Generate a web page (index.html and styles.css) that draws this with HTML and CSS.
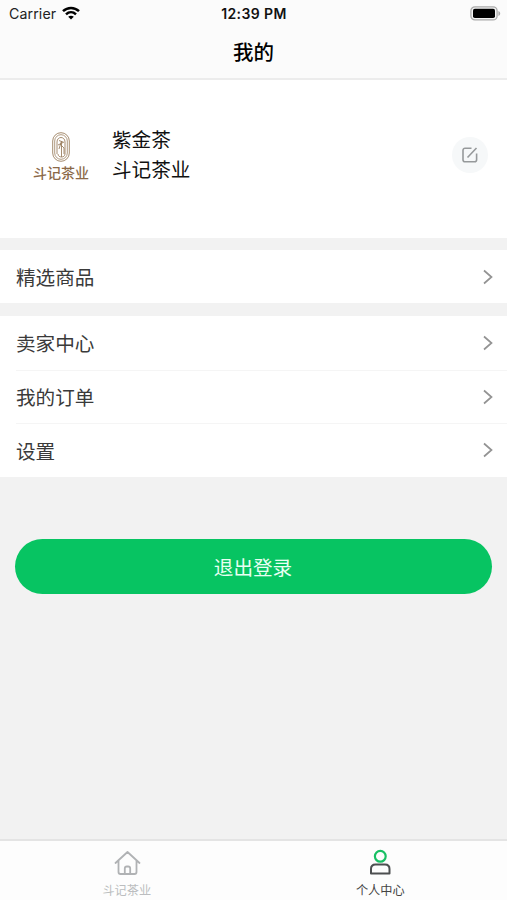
FILE: index.html
```html
<!DOCTYPE html>
<html lang="zh-CN">
<head>
<meta charset="utf-8">
<title>我的</title>
<link rel="stylesheet" href="styles.css">
</head>
<body>
<div class="app">
  <header class="header">
    <div class="status">
      <div class="carrier">Carrier
        <svg class="wifi" width="18" height="14" viewBox="0 0 18 14" fill="none" stroke="#000" stroke-width="2.5"><path d="M1 5.2C5.6.8 12.4.8 17 5.2M4 8.3c2.9-2.7 7.1-2.7 10 0"/><path d="M9 13.5 6.2 10.8c1.6-1.3 4-1.3 5.6 0z" fill="#000" stroke="none"/></svg>
      </div>
      <div class="time">12:39 PM</div>
      <svg class="battery" width="31" height="15" viewBox="0 0 31 15"><rect x=".9" y=".9" width="26.2" height="13" rx="4" fill="#f4f4f4" stroke="#aaa" stroke-width="1.3"/><rect x="3" y="2.8" width="22" height="9.2" rx="1.8"/><path d="M28.4 5c2.4.8 2.4 4.2 0 5z" fill="#aaa"/></svg>
    </div>
    <h1 class="title">我的</h1>
  </header>
  <section class="profile">
    <div class="logo">
      <svg width="18" height="30" viewBox="0 0 18 30" fill="none" stroke="#9c8060"><rect x=".7" y=".7" width="16.6" height="28.6" rx="8.3" stroke-width=".9"/><rect x="2.7" y="2.7" width="12.6" height="24.6" rx="6.3" stroke-width=".8"/><path d="M5 22V10c0-6 8-6 8 0v12c0 4-7 4-7 0M7 8.5l4 1.5M6 13l6-3M7 17l2.5-8v9M8 12l4 4v6M9.5 18v7" stroke-width=".9"/></svg>
      <span class="brand">斗记茶业</span>
    </div>
    <div class="names"><div>紫金茶</div><div>斗记茶业</div></div>
    <div class="edit">
      <svg width="18" height="18" viewBox="0 0 18 18" fill="none" stroke="#96999b" stroke-width="1.6"><path d="M10.5 2.2H4A2 2 0 0 0 2 4.2v9.6A2 2 0 0 0 4 15.8h9.6a2 2 0 0 0 2-2V7.5M6.5 11.5l9-9.5"/></svg>
    </div>
  </section>
  <nav class="group featured">
    <div class="row"><span>精选商品</span><svg class="arrow" viewBox="0 0 10 16"><path d="m1 1.5 7.5 6.5L1 14.5"/></svg></div>
  </nav>
  <nav class="group">
    <div class="row"><span>卖家中心</span><svg class="arrow" viewBox="0 0 10 16"><path d="m1 1.5 7.5 6.5L1 14.5"/></svg></div>
    <div class="row"><span>我的订单</span><svg class="arrow" viewBox="0 0 10 16"><path d="m1 1.5 7.5 6.5L1 14.5"/></svg></div>
    <div class="row"><span>设置</span><svg class="arrow" viewBox="0 0 10 16"><path d="m1 1.5 7.5 6.5L1 14.5"/></svg></div>
  </nav>
  <button class="logout">退出登录</button>
  <footer class="tabs">
    <div class="tab">
      <svg width="28" height="28" viewBox="0 0 28 28" fill="none" stroke="#b0b2b4" stroke-width="1.8" stroke-linejoin="round" stroke-linecap="round"><path d="M2.500 14 14.500 3l12 11M5.500 11.500V23q0 2 2 2h14q2 0 2-2V11.500M11.800 25v-5.500q0-2 2-2h1.400q2 0 2 2V25"/></svg>
      <span>斗记茶业</span>
    </div>
    <div class="tab active">
      <svg width="28" height="28" viewBox="0 0 28 28" fill="none" stroke-width="2.2"><circle cx="14.3" cy="7.3" r="5.4" stroke="#18c064"/><path d="M5 24.500V20q0-4.500 4.500-4.500h9.500q4.500 0 4.500 4.500v4.500z" stroke="#4d4f50" stroke-width="2" stroke-linejoin="round"/></svg>
      <span>个人中心</span>
    </div>
  </footer>
</div>
</body>
</html>
```
FILE: styles.css
```css
* { box-sizing: border-box; }
body { margin: 0; font-family: Inter, "Noto Sans CJK SC", sans-serif; color: #111; }
.app { height: 900px; display: flex; flex-direction: column; background: #f2f2f2; overflow: hidden; }
.header { height: 80px; flex: none; background: #fbfbfb; border-bottom: 2px solid #ececec; }
.status { height: 28px; display: grid; grid-template-columns: 1fr auto 1fr; align-items: center; padding: 0 6px 0 9px; }
.carrier { display: flex; align-items: center; gap: 6px; font-size: 14.2px; letter-spacing: .1px; color: #222; margin-top: -1px; }
.wifi { margin-top: -2px; }
.time { font-size: 14px; font-weight: 600; letter-spacing: .4px; margin: -2px 2px 0 0; }
.battery { justify-self: end; margin-top: -2px; }
.title { margin: 10px 0 0; font-size: 20.5px; line-height: 30px; font-weight: 500; text-align: center; color: #000; }
.profile { height: 158px; flex: none; display: flex; align-items: center; background: #fff; padding: 0 19px 0 33px; }
.logo { width: 56px; display: flex; flex-direction: column; align-items: center; margin-top: -3px; }
.brand { font-size: 14px; line-height: 20px; font-weight: 500; color: #8b6948; white-space: nowrap; margin-top: 1px; }
.names { margin: -8px auto 0 23px; font-size: 19.6px; line-height: 30px; }
.edit { width: 36px; height: 36px; border-radius: 50%; background: #f6f8f9; display: flex; align-items: center; justify-content: center; margin-top: -8px; }
.group { margin-top: 13px; flex: none; background: #fff; }
.featured { margin-top: 12px; }
.row { height: 53.5px; display: flex; align-items: center; justify-content: space-between; margin-left: 16px; padding-right: 14px; font-size: 19.6px; color: #3a3a3a; border-top: 1px solid #f5f5f5; }
.row:first-child { border-top: 0; }
.featured .row { height: 53px; }
.arrow { width: 10px; height: 16px; fill: none; stroke: #939393; stroke-width: 1.7; }
.logout { flex: none; height: 55px; margin: 62px 15px 0; padding: 0 1px 0 0; border: 0; border-radius: 28px; background: #07c462; color: #e9fff2; font: 400 19.6px Inter, "Noto Sans CJK SC", sans-serif; }
.tabs { height: 61px; margin-top: auto; flex: none; display: flex; background: #fdfdfd; border-top: 2px solid #e4e4e4; }
.tab { flex: 1; display: flex; flex-direction: column; align-items: center; padding-top: 8px; font-size: 12.2px; line-height: 18px; color: #bbbdbf; }
.tab svg { flex: none; }
.tab span { margin-top: 5px; }
.active { color: #444; }
```
